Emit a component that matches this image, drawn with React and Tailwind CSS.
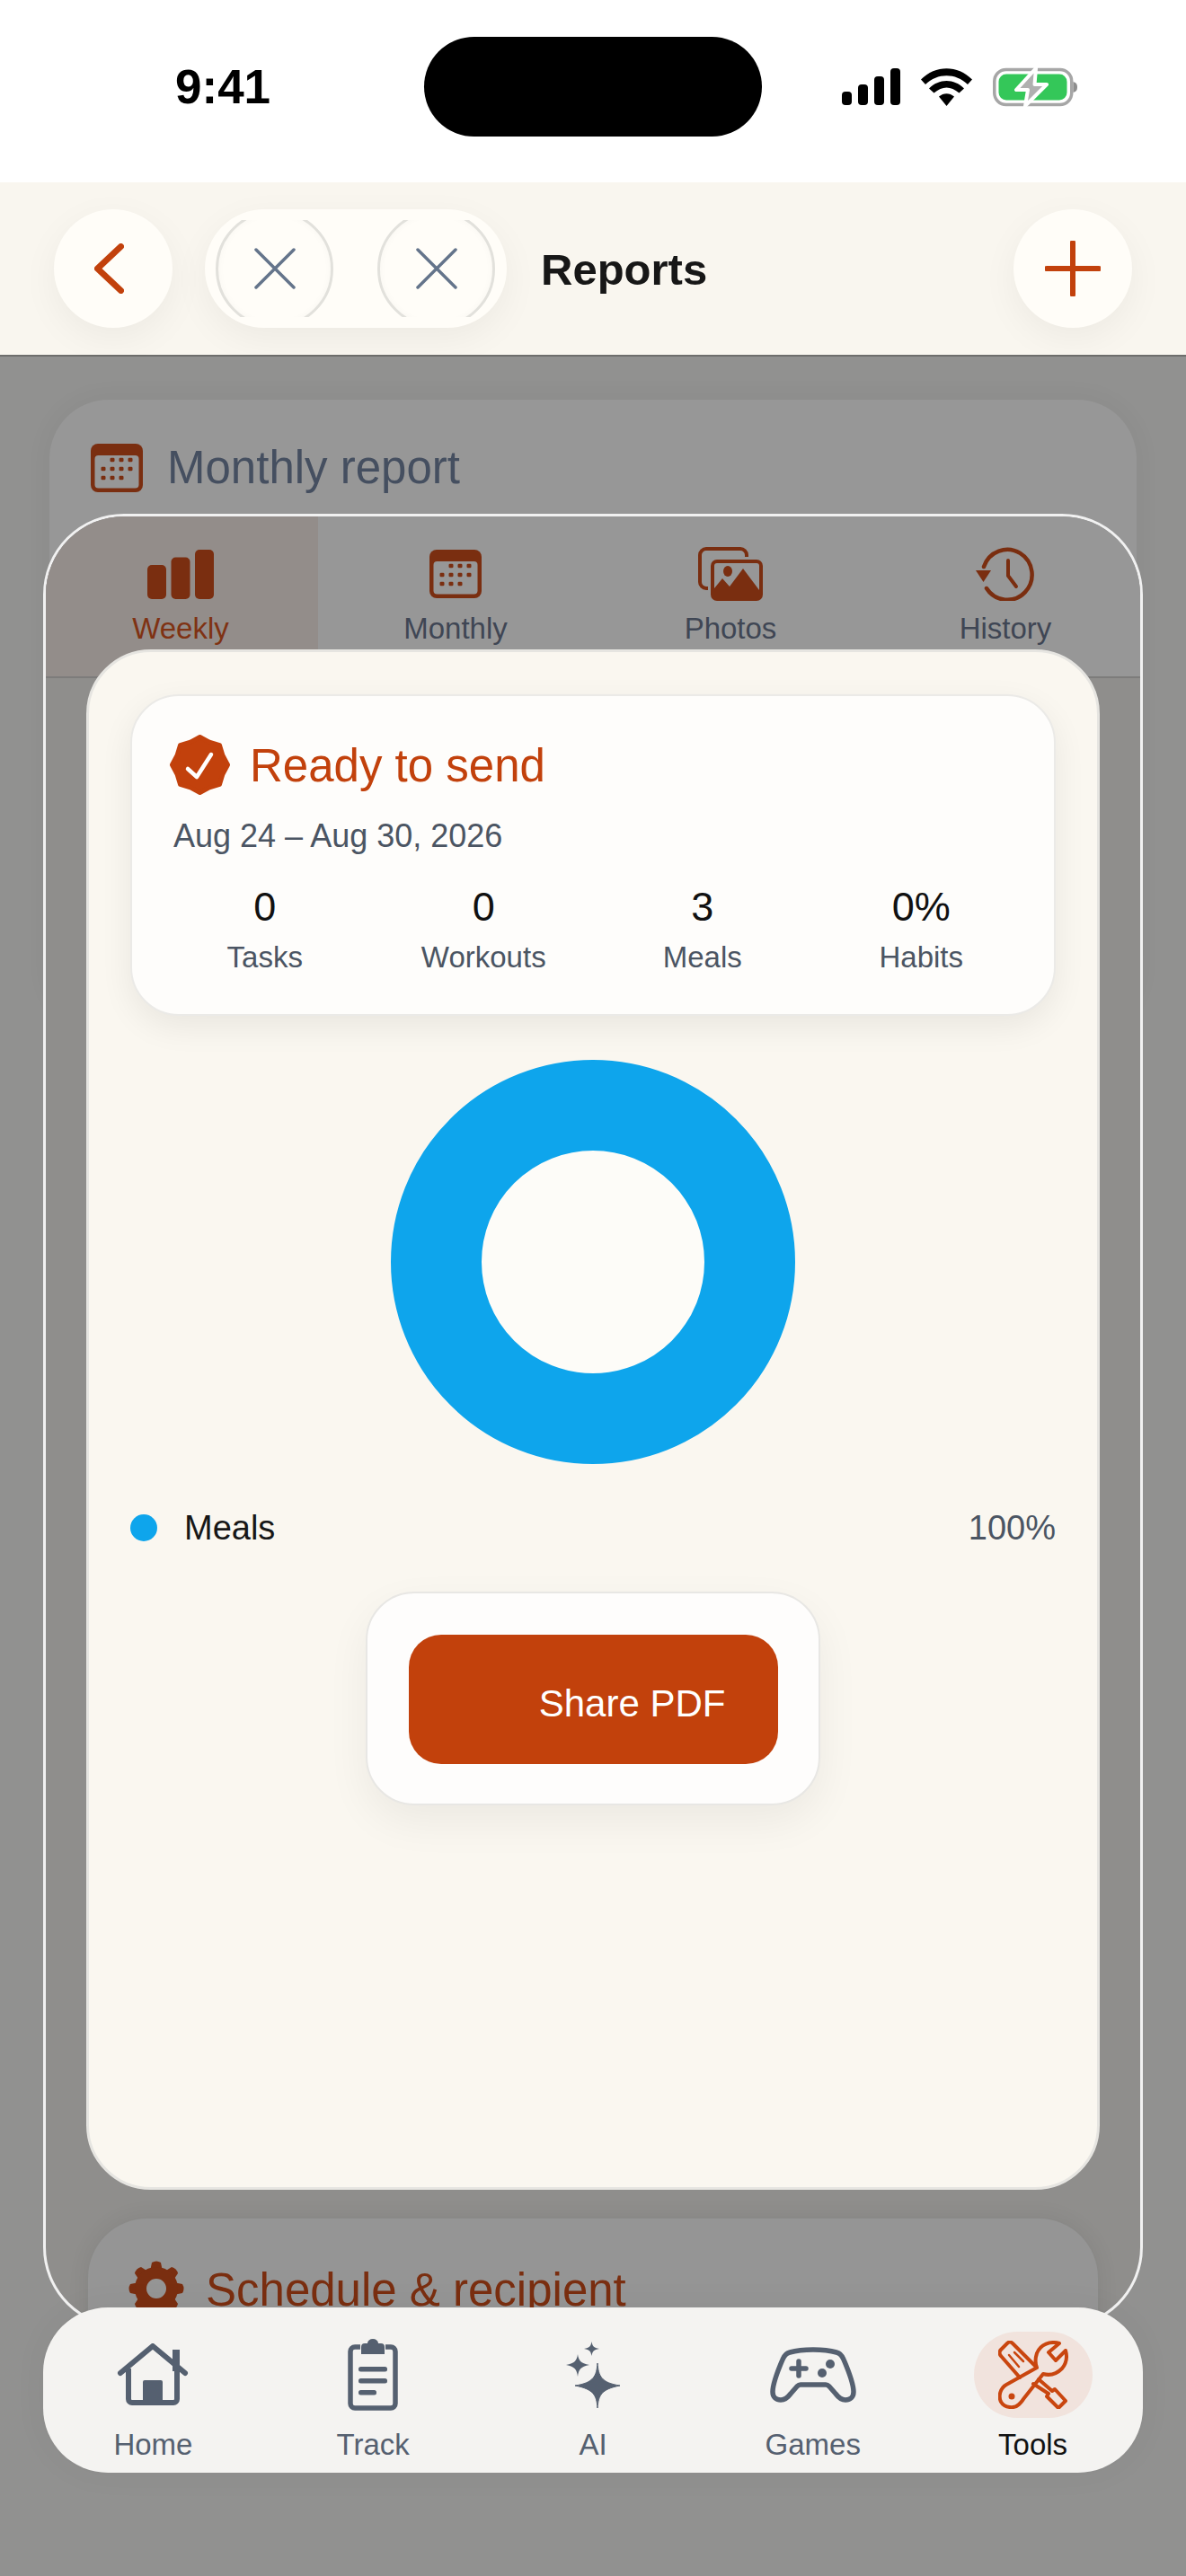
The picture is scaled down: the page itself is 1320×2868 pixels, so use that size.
import React from "react";

const F = { fontFamily: '"Liberation Sans", Arial, sans-serif' };

function Calendar({ className, fill = "#7a2e10", bg = "#979797" }) {
  const dots = [
    [24, 18], [34, 18], [44, 18],
    [14, 28], [24, 28], [34, 28], [44, 28],
    [14, 38], [24, 38], [34, 38],
  ];
  return (
    <svg viewBox="0 0 58 54" className={className}>
      <rect width="58" height="54" rx="8" fill={fill} />
      <rect x="4.500" y="13" width="49" height="36.500" rx="4" fill={bg} />
      {dots.map(([x, y]) => (
        <rect key={`${x}-${y}`} x={x - 2.5} y={y - 2.3} width="5" height="4.600" rx="1.400" fill={fill} />
      ))}
    </svg>
  );
}

function Gear({ className }) {
  const teeth = [0, 45, 90, 135, 180, 225, 270, 315];
  return (
    <svg viewBox="0 0 62 62" className={className}>
      {teeth.map((a) => (
        <path key={a} d="M24 12 L26 2 Q31 -1 36 2 L38 12 Z" fill="#7a2e10" transform={`rotate(${a} 31 31)`} />
      ))}
      <circle cx="31" cy="31" r="17.500" fill="none" stroke="#7a2e10" strokeWidth="13" />
    </svg>
  );
}

function Badge({ className }) {
  const pts = [];
  for (let i = 0; i < 16; i++) {
    const r = i % 2 === 0 ? 31 : 27.5;
    const a = (i * Math.PI) / 8 - Math.PI / 2;
    pts.push(`${(33.5 + r * Math.cos(a)).toFixed(2)},${(33.5 + r * Math.sin(a)).toFixed(2)}`);
  }
  return (
    <svg viewBox="0 0 67 67" className={className}>
      <polygon points={pts.join(" ")} fill="#c2410c" stroke="#c2410c" strokeWidth="5" strokeLinejoin="round" />
      <path d="M20 38 L30 47 L46 22" fill="none" stroke="#ffffff" strokeWidth="4.500" strokeLinecap="round" strokeLinejoin="round" />
    </svg>
  );
}

function Tab({ label, active, children }) {
  return (
    <div className={`flex-1 h-[178px] flex flex-col items-center ${active ? "bg-[#938d8a]" : ""}`}>
      <div className="h-[71px] mt-[34px] flex items-start justify-center">{children}</div>
      <div className={`text-[33px] leading-[40px] ${active ? "text-[#7f3213]" : "text-[#3f4654]"}`}>{label}</div>
    </div>
  );
}

function Stat({ value, label }) {
  return (
    <div className="flex-1 flex flex-col items-center">
      <div className="text-[45px] leading-[50px] text-[#111111]">{value}</div>
      <div className="text-[33px] leading-[40px] mt-[11px] text-[#4b5563]">{label}</div>
    </div>
  );
}

function NavItem({ label, active, children }) {
  return (
    <div className="flex-1 flex flex-col items-center">
      <div className={`w-[132px] h-[96px] flex items-center justify-center rounded-[48px] ${active ? "bg-[#f1e3dd]" : ""}`}>
        {children}
      </div>
      <div className={`text-[33px] leading-[40px] mt-[10px] ${active ? "text-[#111111]" : "text-[#556070]"}`}>{label}</div>
    </div>
  );
}

export default function App() {
  return (
    <div style={F} className="w-[1320px] h-[2868px] flex flex-col bg-white overflow-hidden">
      {/* status bar */}
      <div className="h-[203px] flex items-start pt-[41px] shrink-0 bg-white">
        <div className="w-[472px] h-[111px] pl-[195px] flex items-center">
          <span className="text-[53px] font-bold text-black leading-none">9:41</span>
        </div>
        <div className="w-[376px] h-[111px] rounded-[56px] bg-black" />
        <div className="h-[111px] pl-[89px] flex items-center gap-[23px]">
          <svg viewBox="0 0 65 41" className="w-[65px] h-[41px]">
            <rect x="0" y="26" width="11" height="15" rx="4" />
            <rect x="18" y="18" width="11" height="23" rx="4" />
            <rect x="36" y="9" width="11" height="32" rx="4" />
            <rect x="54" y="0" width="11" height="41" rx="4" />
          </svg>
          <svg viewBox="0 0 57 42" className="w-[57px] h-[42px]">
            <path d="M0 12.500 C16 -4 41 -4 57 12.500 L52 18 C38.500 5 18.500 5 5 18 Z" />
            <path d="M9 22.500 C20 11 37 11 48 22.500 L42.500 27.500 C33 19.500 24 19.500 14.500 27.500 Z" />
            <path d="M20 31.500 C25 27 32 27 37 31.500 L28.500 42 Z" />
          </svg>
          <svg viewBox="0 0 94 44" className="w-[94px] h-[44px]">
            <rect x="1.750" y="2.500" width="86" height="39" rx="13" fill="none" stroke="#a6a6a6" strokeWidth="3.500" />
            <rect x="6.500" y="7.500" width="76" height="29" rx="8.500" fill="#34c759" />
            <path d="M89.500 16 C93 17 94 19 94 22 C94 25 93 27 89.500 28 Z" fill="#8e8e8e" />
            <path d="M48 1 L26 25 H39 L36 43 L60 19 H46.500 Z" fill="#b0b0b0" stroke="#ffffff" strokeWidth="4" strokeLinejoin="round" />
          </svg>
        </div>
      </div>

      {/* header */}
      <div className="h-[194px] shrink-0 bg-[#f9f6ef] flex items-center pl-[60px] pr-[60px] border-b-[2px] border-[#6e6e6c]">
        <div className="w-[132px] h-[132px] rounded-full bg-[#fffdf8] shadow-[0_12px_40px_rgba(0,0,0,0.05)] flex items-center justify-center">
          <svg viewBox="0 0 33 56" className="w-[33px] h-[56px] -ml-[9px]">
            <path d="M29.500 3.500 L3.500 28 L29.500 52.500" fill="none" stroke="#c2410c" strokeWidth="7" strokeLinecap="round" strokeLinejoin="round" />
          </svg>
        </div>
        <div className="ml-[36px] w-[336px] h-[132px] rounded-[66px] bg-[#fffdf8] shadow-[0_12px_40px_rgba(0,0,0,0.05)] flex items-center pl-[12px] gap-[49px]">
          {[0, 1].map((i) => (
            <div key={i} className="w-[131px] h-[108px] overflow-hidden flex items-center justify-center">
              <div className="w-[131px] h-[131px] shrink-0 rounded-full border-[3px] border-[#e2e1dc] shadow-[inset_0_0_8px_rgba(0,0,0,0.03)] flex items-center justify-center">
                <svg viewBox="0 0 46 46" className="w-[46px] h-[46px]">
                  <path d="M2 2 L44 44 M44 2 L2 44" fill="none" stroke="#64748b" strokeWidth="3.500" strokeLinecap="round" />
                </svg>
              </div>
            </div>
          ))}
        </div>
        <div className="ml-[38px] pt-[3px] text-[49px] font-bold text-[#171717] leading-none">Reports</div>
        <div className="ml-auto w-[132px] h-[132px] rounded-full bg-[#fffdf8] shadow-[0_12px_40px_rgba(0,0,0,0.05)] flex items-center justify-center">
          <svg viewBox="0 0 62 62" className="w-[62px] h-[62px]">
            <path d="M31 2 V60 M2 31 H60" fill="none" stroke="#c2410c" strokeWidth="6" strokeLinecap="round" />
          </svg>
        </div>
      </div>

      {/* dimmed page */}
      <div className="relative flex-1 bg-[#919190] overflow-hidden">
        {/* page card behind the sheet */}
        <div className="mx-[55px] mt-[48px] h-[700px] rounded-[66px] bg-[#979797] shadow-[0_0_30px_rgba(0,0,0,0.05)] pt-[49px] pl-[46px] flex items-start">
          <Calendar className="w-[58px] h-[54px]" />
          <div className="ml-[27px] text-[51px] leading-[54px] text-[#454f60]">Monthly report</div>
        </div>

        {/* sheet */}
        <div className="absolute left-[48px] top-[175px] w-[1224px] h-[2020px] rounded-[90px] border-[3px] border-[#f1f1f1] overflow-hidden bg-[#8f8e8c]">
          <div className="flex -mx-[3px] bg-[#979797] border-b-[2px] border-[#7d7c7b] h-[180px]">
            <Tab label="Weekly" active>
              <svg viewBox="0 0 74 55" className="w-[74px] h-[55px] mt-[3px]">
                <rect x="0" y="17" width="21" height="38" rx="5" fill="#7a2e10" />
                <rect x="26.500" y="8.500" width="21" height="46.500" rx="5" fill="#7a2e10" />
                <rect x="53" y="0" width="21" height="55" rx="5" fill="#7a2e10" />
              </svg>
            </Tab>
            <Tab label="Monthly">
              <Calendar className="w-[58px] h-[54px] mt-[3px]" />
            </Tab>
            <Tab label="Photos">
              <svg viewBox="0 0 72 60" className="w-[72px] h-[60px]">
                <rect x="2" y="2" width="52" height="44" rx="7" fill="none" stroke="#7a2e10" strokeWidth="4" />
                <rect x="11" y="11" width="61" height="49" rx="7" fill="#979797" />
                <rect x="14" y="14" width="58" height="46" rx="7" fill="#7a2e10" />
                <rect x="18" y="18" width="50" height="32" rx="3" fill="#979797" />
                <path d="M18 56 V46 L27 35 L35 44 L50 24 L68 48 V56 Z" fill="#7a2e10" />
                <ellipse cx="33" cy="27" rx="5" ry="6" fill="#7a2e10" />
              </svg>
            </Tab>
            <Tab label="History">
              <svg viewBox="0 0 66 60" className="w-[66px] h-[60px]">
                <path d="M9 22 A27.500 28 0 1 1 12 46" fill="none" stroke="#7a2e10" strokeWidth="4.500" strokeLinecap="round" />
                <path d="M0 26 H17 L8.500 39 Z" fill="#7a2e10" />
                <path d="M36 15 V32 L45 44" fill="none" stroke="#7a2e10" strokeWidth="4" strokeLinecap="round" strokeLinejoin="round" />
              </svg>
            </Tab>
          </div>

          <div className="px-[45px] -mt-[32px] flex flex-col relative">
            {/* modal card */}
            <div className="h-[1715px] rounded-[72px] border-[3px] border-[#e6e5e1] bg-[#faf7f0] pt-[47px] px-[46px] flex flex-col items-stretch">
              <div className="h-[358px] rounded-[54px] border-[2px] border-[#ebeae7] bg-[#fefdfb] shadow-[0_12px_36px_rgba(0,0,0,0.07)] px-[26px] pt-[42px]">
                <div className="flex items-center h-[68px] pl-[16px]">
                  <Badge className="w-[67px] h-[67px] shrink-0" />
                  <div className="ml-[22px] pt-[3px] text-[51px] leading-[60px] text-[#c2410c]">Ready to send</div>
                </div>
                <div className="mt-[24px] pl-[20px] text-[36px] leading-[44px] text-[#4b5563]">Aug 24 – Aug 30, 2026</div>
                <div className="flex mt-[32px]">
                  <Stat value="0" label="Tasks" />
                  <Stat value="0" label="Workouts" />
                  <Stat value="3" label="Meals" />
                  <Stat value="0%" label="Habits" />
                </div>
              </div>

              <div className="mt-[49px] flex justify-center">
                <div className="w-[450px] h-[450px] rounded-full border-[101px] border-[#0ea5ec] bg-[#fdfcf8]" />
              </div>

              <div className="mt-[49px] flex items-center h-[44px]">
                <div className="w-[30px] h-[30px] rounded-full bg-[#0ea5ec]" />
                <div className="ml-[30px] text-[38px] text-[#171717]">Meals</div>
                <div className="ml-auto text-[38px] text-[#4b5563]">100%</div>
              </div>

              <div className="mt-[49px] self-center w-[506px] h-[238px] rounded-[54px] border-[2px] border-[#e8e7e4] bg-[#fefdfc] shadow-[0_18px_48px_rgba(0,0,0,0.06)] flex items-center justify-center">
                <div className="w-[411px] h-[144px] mt-[2px] rounded-[36px] bg-[#c2410c] flex items-center justify-end pr-[58px] pt-[8px]">
                  <span className="text-[42px] text-white">Share PDF</span>
                </div>
              </div>
            </div>

            {/* schedule card */}
            <div className="mt-[32px] h-[300px] mx-[2px] rounded-[66px] bg-[#959595] shadow-[0_0_24px_rgba(0,0,0,0.08)] pt-[47px] pl-[45px] flex items-start">
              <Gear className="w-[62px] h-[62px] shrink-0" />
              <div className="ml-[24px] mt-[2px] text-[51px] leading-[62px] text-[#7a2e10]">Schedule &amp; recipient</div>
            </div>
          </div>
        </div>

        {/* bottom nav */}
        <div className="absolute left-[48px] top-[2172px] w-[1224px] h-[184px] rounded-[72px] bg-[#f4f3f1] shadow-[0_0_40px_rgba(0,0,0,0.04)] pt-[27px] flex">
          <NavItem label="Home">
            <svg viewBox="0 0 80 70" className="w-[80px] h-[70px]">
              <path d="M4 33 L40 3 L76 33" fill="none" stroke="#556070" strokeWidth="6" strokeLinecap="round" strokeLinejoin="round" />
              <path d="M13 28 V62 A4 4 0 0 0 17 66 H63 A4 4 0 0 0 67 62 V28" fill="none" stroke="#556070" strokeWidth="6" />
              <rect x="62" y="7" width="8" height="24" fill="#556070" />
              <rect x="29" y="41" width="22" height="28" rx="2" fill="#556070" />
            </svg>
          </NavItem>
          <NavItem label="Track">
            <svg viewBox="0 0 56 80" className="w-[56px] h-[80px]">
              <path d="M14 9 H8 A5 5 0 0 0 3 14 V72 A5 5 0 0 0 8 77 H48 A5 5 0 0 0 53 72 V14 A5 5 0 0 0 48 9 H42" fill="none" stroke="#556070" strokeWidth="5.500" />
              <path d="M15 17 V9 A4 4 0 0 1 19 5 H22 A6 5 0 0 1 34 5 H37 A4 4 0 0 1 41 9 V17 Z" fill="#556070" />
              <rect x="12" y="31" width="32" height="5.500" rx="2.500" fill="#556070" />
              <rect x="12" y="44" width="32" height="5.500" rx="2.500" fill="#556070" />
              <rect x="12" y="57" width="20" height="5.500" rx="2.500" fill="#556070" />
            </svg>
          </NavItem>
          <NavItem label="AI">
            <svg viewBox="0 0 60 74" className="w-[60px] h-[74px]">
              <path d="M35 24 C36 38 39 46 60 49 C39 53 36 60 35 74 C34 60 31 53 10 49 C31 46 34 38 35 24 Z" fill="#556070" stroke="#556070" strokeWidth="1" strokeLinejoin="round" />
              <path d="M13 14 C14 21 16 24 26 26 C16 28 14 31 13 39 C12 31 10 28 0 26 C10 24 12 21 13 14 Z" fill="#556070" />
              <path d="M28.500 0 C29.500 5 30.500 7 37 8 C30.500 9 29.500 11 28.500 16 C27.500 11 26.500 9 20 8 C26.500 7 27.500 5 28.500 0 Z" fill="#556070" />
            </svg>
          </NavItem>
          <NavItem label="Games">
            <svg viewBox="0 0 96 62" className="w-[96px] h-[62px]">
              <path d="M22 6 C36 2 60 2 74 6 C78 7 80 9 82 14 C88 28 93 42 93 50 C93 56 89 59 84 59 C79 59 76 56 73 52 L66 44 C65 43 64 42 62 42 H34 C32 42 31 43 30 44 L23 52 C20 56 17 59 12 59 C7 59 3 56 3 50 C3 42 8 28 14 14 C16 9 18 7 22 6 Z" fill="none" stroke="#556070" strokeWidth="5.500" strokeLinejoin="round" />
              <path d="M32 16 V32 M24 24 H40" fill="none" stroke="#556070" strokeWidth="5.500" strokeLinecap="round" />
              <circle cx="67" cy="19" r="5" fill="#556070" />
              <circle cx="58" cy="29" r="5" fill="#556070" />
            </svg>
          </NavItem>
          <NavItem label="Tools" active>
            <svg viewBox="0 0 78 76" className="w-[78px] h-[76px]">
              <g fill="none" stroke="#c9460f" strokeWidth="4" strokeLinejoin="round" strokeLinecap="round">
                <path d="M41 28 L16 3 C14 1 12 1 10 3 L3 10 C1 12 1 15 3 17 L24 41" />
                <path d="M12 16 L23 29 M18 13 L28 23" strokeWidth="2.500" />
                <path d="M45 43 L60 56 L63 54 L75 67 L67 75 L54 62 L56 59 L39 48" />
                <path d="M68 3 C58 0 47 4 43 14 C41 20 41 25 43 30 L9 49 C2 53 0 62 3 68 C7 75 18 76 23 71 C25 69 27 67 28 65 L50 37 C57 39 65 37 71 31 C76 25 77 18 75 11 L64 22 L56 13 Z" />
              </g>
              <circle cx="15" cy="62" r="3.500" fill="#c9460f" />
            </svg>
          </NavItem>
        </div>
      </div>
    </div>
  );
}
